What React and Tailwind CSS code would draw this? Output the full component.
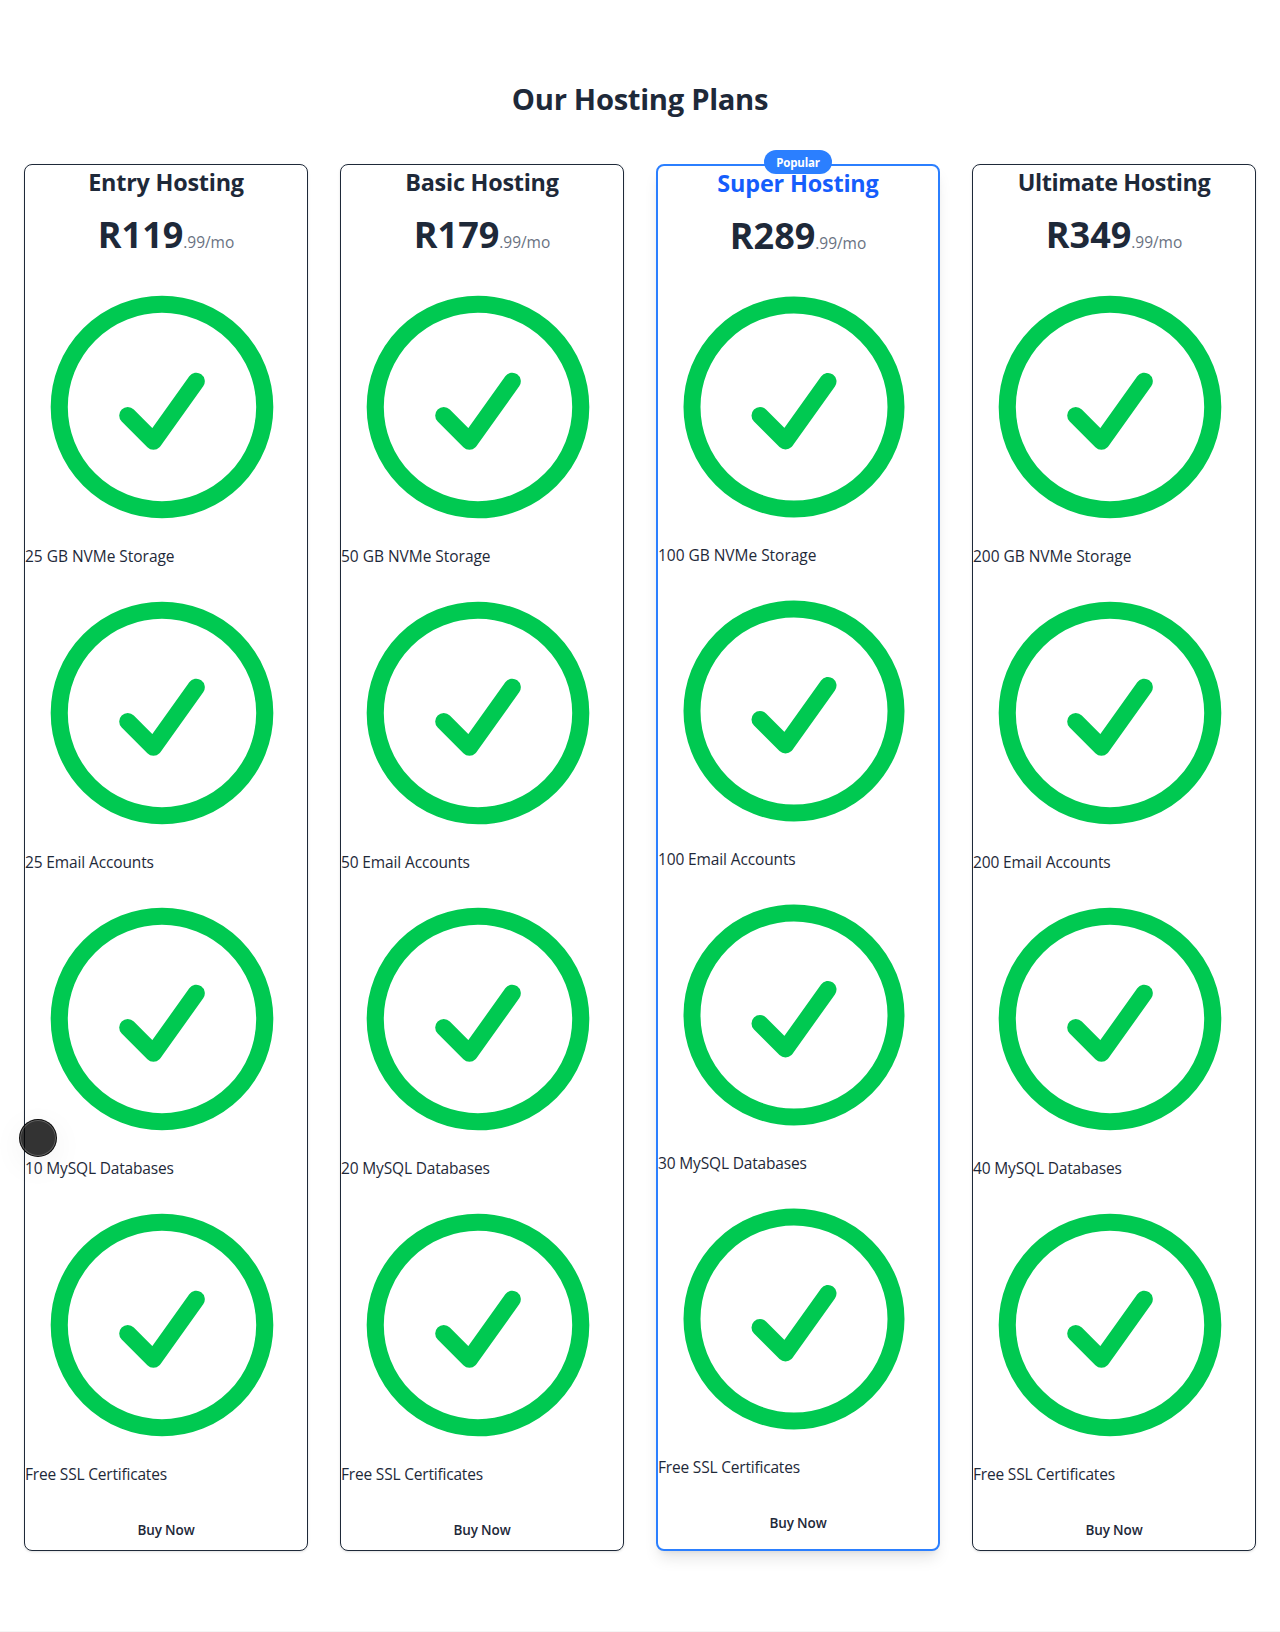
const plans = [
  { name: "Entry Hosting", price: "R119", storage: "25 GB", email: "25", db: "10", track: "tracking-[-0.22px]" },
  { name: "Basic Hosting", price: "R179", storage: "50 GB", email: "50", db: "20", track: "tracking-[-0.24px]" },
  { name: "Super Hosting", price: "R289", storage: "100 GB", email: "100", db: "30", track: "tracking-[-0.17px]", popular: true },
  { name: "Ultimate Hosting", price: "R349", storage: "200 GB", email: "200", db: "40", track: "tracking-[-0.42px]" },
];

function CheckCircle() {
  return (
    <svg
      className="mr-2 block min-w-0 flex-1 text-green-500"
      viewBox="0 0 24 24"
      fill="none"
      stroke="currentColor"
      strokeWidth="1.5"
      strokeLinecap="round"
      strokeLinejoin="round"
    >
      <path d="M9 12.75 11.25 15 15 9.75M21 12a9 9 0 1 1-18 0 9 9 0 0 1 18 0Z" />
    </svg>
  );
}

function Feature({ children, track }) {
  return (
    <li>
      <div className="flex">
        <CheckCircle />
      </div>
      <p className={`h-6 text-[15.5px] leading-6 whitespace-nowrap ${track}`}>{children}</p>
    </li>
  );
}

function PlanCard({ plan }) {
  const frame = plan.popular ? "border-2 border-blue-500 shadow-lg" : "border border-gray-800 shadow-sm";
  return (
    <div className={`relative rounded-lg bg-white ${frame}`}>
      {plan.popular && (
        <span className="absolute -top-4 left-1/2 h-6 w-[68px] -translate-x-1/2 rounded-full bg-blue-500 pt-px text-center text-[11.5px] leading-6 font-bold tracking-[-0.16px] text-white">
          Popular
        </span>
      )}
      <h3 className={`mb-4 pt-px text-center text-[23.4px] leading-8 font-bold ${plan.track} ${plan.popular ? "text-blue-600" : ""}`}>
        {plan.name}
      </h3>
      <p className="mb-[15px] h-[41px] pt-px text-center text-4xl leading-10 font-bold">
        {plan.price}
        <span className="text-[15.5px] leading-6 font-normal tracking-[-0.05px] text-gray-500">.99/mo</span>
      </p>
      <ul className="mb-6 space-y-2">
        <Feature track="tracking-[-0.03px]">{plan.storage} NVMe Storage</Feature>
        <Feature track="tracking-[-0.13px]">{plan.email} Email Accounts</Feature>
        <Feature track="tracking-[-0.16px]">{plan.db} MySQL Databases</Feature>
        <Feature track="tracking-[-0.19px]">Free SSL Certificates</Feature>
      </ul>
      <button className="block h-10 w-full text-center text-[13.5px] font-semibold tracking-[-0.12px]">Buy Now</button>
    </div>
  );
}

export default function App() {
  return (
    <div className="relative h-[1632px] overflow-hidden border-b border-[#f5f5f5] bg-white font-['Open_Sans',sans-serif] text-gray-800">
      <section className="px-6 py-20">
        <h2 className="mb-[47px] pt-px text-center text-[29.2px] leading-9 font-bold tracking-[-0.31px]">Our Hosting Plans</h2>
        <div className="grid grid-cols-4 gap-8">
          {plans.map((plan) => (
            <PlanCard key={plan.name} plan={plan} />
          ))}
        </div>
      </section>
      <div className="absolute top-[1119px] left-[19px] size-[38px] rounded-full border border-black/80 bg-black/80 shadow-[0_8px_32px_rgba(0,0,0,0.06),inset_0_0_0_1px_rgba(255,255,255,0.22)]" />
    </div>
  );
}
